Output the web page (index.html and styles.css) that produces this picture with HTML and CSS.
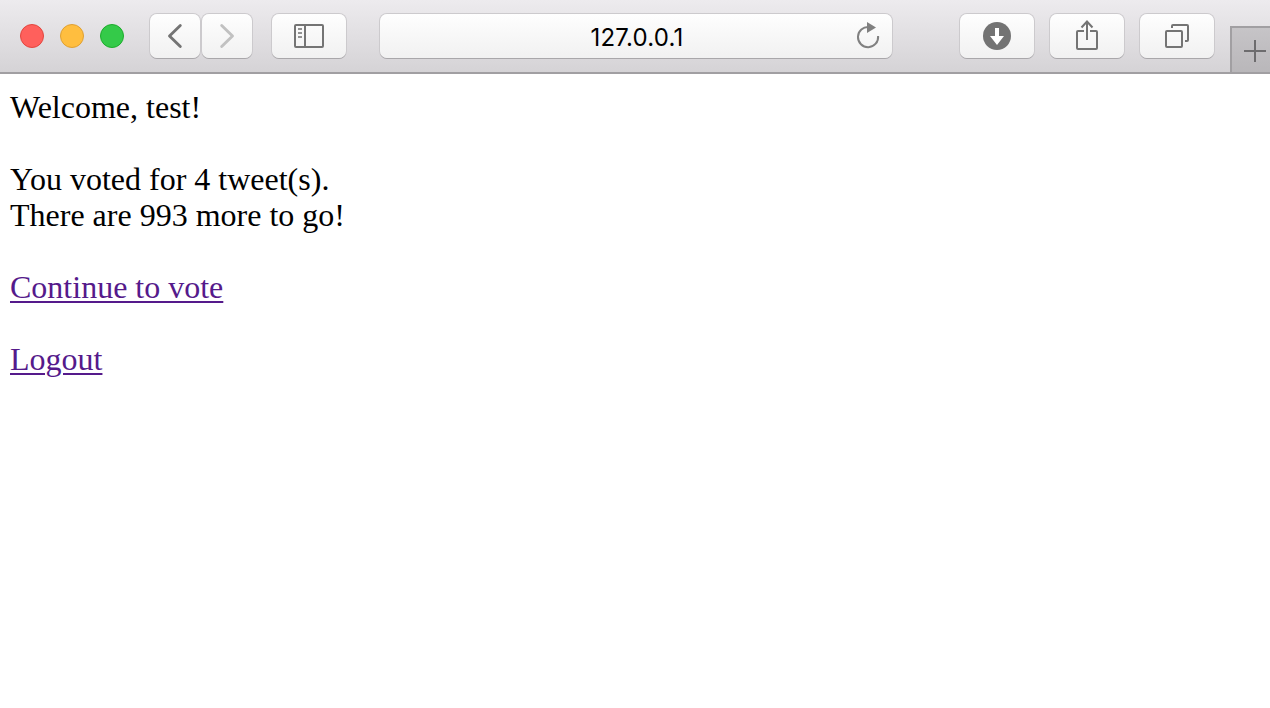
FILE: index.html
```html
<!DOCTYPE html>
<html lang="en">
<head>
<meta charset="utf-8">
<title>127.0.0.1</title>
<link rel="stylesheet" href="styles.css">
</head>
<body>
<header class="toolbar">
  <div class="lights"><span class="light close"></span><span class="light minimize"></span><span class="light expand"></span></div>
  <div class="nav">
    <button class="button small" aria-label="Back"><svg width="50" height="44" fill="none" stroke="#747474" stroke-width="2.9" stroke-linecap="round" stroke-linejoin="round"><path d="M30.3 11.5 19.5 22l10.8 10.5"/></svg></button>
    <button class="button small" aria-label="Forward"><svg width="50" height="44" fill="none" stroke="#c1c1c1" stroke-width="2.9" stroke-linecap="round" stroke-linejoin="round"><path d="M19.7 11.5 30.5 22 19.7 32.5"/></svg></button>
  </div>
  <button class="button sidebar" aria-label="Sidebar"><svg width="74" height="44" fill="none" stroke="#747474" stroke-width="2"><rect x="23" y="11" width="28" height="22" rx="1"/><path d="M33 11v22"/><path d="M26 15h4M26 19h4M26 23h4" stroke="#929292"/></svg></button>
  <div class="button address"><span class="url">127.0.0.1</span><svg class="reload" width="40" height="44"><path d="M17 13A10.1 10.1 0 1 0 26.100 22" fill="none" stroke="#808080" stroke-width="2"/><path d="M15 8v11l9-5.500z" fill="#808080"/></svg></div>
  <div class="actions">
    <button class="button" aria-label="Downloads"><svg width="74" height="44"><circle cx="37" cy="22" r="14" fill="#737373"/><path d="M35 14h4v8h5l-7 9-7-9h5z" fill="#fff"/></svg></button>
    <button class="button" aria-label="Share"><svg width="74" height="44" fill="none" stroke="#747474" stroke-width="2"><path d="M34 17h-6q-1 0-1 1v16q0 1 1 1h18q1 0 1-1V18q0-1-1-1h-6M37 26V8M31.5 13.5 37 7.5l5.500 6"/></svg></button>
    <button class="button" aria-label="Tabs"><svg width="74" height="44" fill="none" stroke="#747474" stroke-width="2"><rect x="26" y="17" width="16" height="16" rx="1"/><path d="M32 14v-2q0-1 1-1h14q1 0 1 1v14q0 1-1 1h-2"/></svg></button>
  </div>
  <button class="new-tab" aria-label="New tab"><svg width="38" height="44" fill="none" stroke="#6d6c6e" stroke-width="2"><path d="M12 23h22M23 12v22"/></svg></button>
</header>
<main class="page">
  <p>Welcome, test!</p>
  <p>You voted for 4 tweet(s).<br>There are 993 more to go!</p>
  <p><a href="#">Continue to vote</a></p>
  <p><a href="#">Logout</a></p>
</main>
</body>
</html>
```
FILE: styles.css
```css
* { box-sizing: border-box; }
body { margin: 0; background: #fff; overflow: hidden; }
.toolbar {
  display: flex;
  align-items: flex-start;
  height: 74px;
  padding: 14px 0 0 20px;
  border-bottom: 2px solid #a19fa2;
  background: linear-gradient(#edebee, #d5d3d6);
}
.lights { display: flex; gap: 16px; margin: 10px 26px 0 0; }
.light { width: 24px; height: 24px; border: 1px solid; border-radius: 50%; }
.close { background: #ff605c; border-color: #e2463f; }
.minimize { background: #ffbe3f; border-color: #dfa033; }
.expand { background: #34ca49; border-color: #1dac2c; }
.nav { display: flex; gap: 2px; margin-right: 20px; }
.button {
  display: block;
  flex: none;
  width: 74px;
  height: 44px;
  padding: 0;
  border: 0;
  border-radius: 7px;
  background: linear-gradient(#fefefe, #f1f1f1);
  box-shadow: 0 1px 0 0 #a9a7aa, 0 0 0 1px #cccacd;
}
.button svg, .new-tab svg { display: block; }
.small { width: 50px; }
.sidebar { margin-right: 34px; }
.address {
  display: grid;
  grid-template-columns: 40px 1fr 40px;
  width: 512px;
  margin-right: 68px;
}
.url {
  grid-column: 2;
  padding-left: 2px;
  font: 24px/48px Inter, Roboto, sans-serif;
  letter-spacing: 0.2px;
  text-align: center;
  color: #000;
}
.reload { grid-column: 3; }
.actions { display: flex; gap: 16px; margin-right: 16px; }
.new-tab {
  flex: none;
  width: 40px;
  height: 46px;
  margin-top: 12px;
  padding: 0;
  border: solid #a19fa2;
  border-width: 2px 0 0 2px;
  background: linear-gradient(#c6c4c7, #b9b7ba);
}
.page {
  padding: 15px 10px;
  font: 32px/36px "Liberation Serif", "Times New Roman", serif;
  color: #000;
}
.page p { margin: 0 0 36px; }
.page a {
  color: #551a8b;
  text-decoration-thickness: 2px;
  text-underline-offset: 3px;
}
```
